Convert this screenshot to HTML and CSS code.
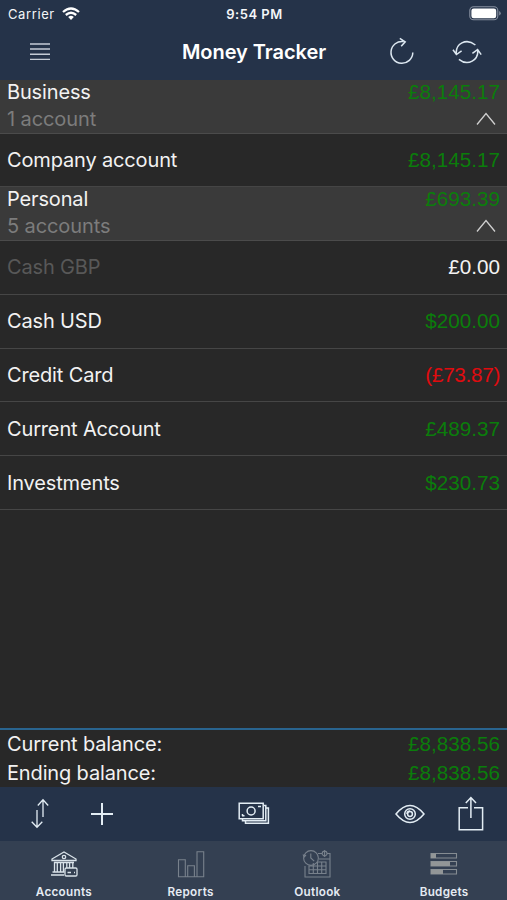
FILE: index.html
```html
<!DOCTYPE html>
<html lang="en">
<head>
<meta charset="utf-8">
<title>Money Tracker</title>
<link rel="stylesheet" href="styles.css">
</head>
<body>
<div class="app">
  <header class="header">
    <div class="status">
      <div class="carrier"><span>Carrier</span>
        <svg class="wifi" width="18" height="14" viewBox="0 0 18 14" fill="none" stroke="#fff" stroke-width="2.3"><path d="M1 5Q9-2 17 5M3.8 8Q9 3.6 14.2 8"/><path d="M6.2 10Q9 7.7 11.8 10L9 13z" fill="#fff" stroke="none"/></svg>
      </div>
      <span class="time">9:54 PM</span>
      <svg class="battery" width="32" height="15" viewBox="0 0 32 15"><rect x=".8" y=".8" width="28" height="13" rx="3.8" fill="none" stroke="#8790a0" stroke-width="1.1"/><rect x="2.4" y="2.4" width="24.8" height="9.8" rx="2.3" fill="#fff"/><path d="M30.2 5v4.6q1.5-.7 1.5-2.3T30.2 5" fill="#8790a0"/></svg>
    </div>
    <div class="titlebar">
      <svg class="menu" width="20" height="18" viewBox="0 0 20 18" stroke="#c5ccd6" stroke-width="1.4"><path d="M0 1h20M0 6h20M0 11.2h20M0 16.4h20"/></svg>
      <h1>Money Tracker</h1>
      <div class="actions">
        <svg width="26" height="30" viewBox="0 0 26 30" fill="none" stroke="#dce7f0" stroke-width="1.5"><path d="M23.8 15.5A10.9 10.9 0 1 1 14.5 4.6M10.8 1.4 16.2 4.8 12.2 9.3"/></svg>
        <svg width="30" height="26" viewBox="0 0 30 26" fill="none" stroke="#dce7f0" stroke-width="1.5"><path d="M4.3 15C3.3 5 14-1.5 23.4 6M1 10.7l3.4 4.8 5.2-3.6M25.7 11c1 9.8-9.5 16.8-18.8 9.3M20.4 14.3l5.2-3.7 3.6 5"/></svg>
      </div>
    </div>
  </header>

  <main class="list">
    <section class="group">
      <div class="line"><span>Business</span><span class="money">£8,145.17</span></div>
      <div class="line sub"><span>1 account</span><svg class="chevron" width="20" height="14" viewBox="0 0 20 14"><path d="M1 12.5 10 1.5l9 11"/></svg></div>
    </section>
    <div class="row short"><span>Company account</span><span class="money">£8,145.17</span></div>
    <section class="group personal">
      <div class="line"><span>Personal</span><span class="money">£693.39</span></div>
      <div class="line sub"><span>5 accounts</span><svg class="chevron" width="20" height="14" viewBox="0 0 20 14"><path d="M1 12.5 10 1.5l9 11"/></svg></div>
    </section>
    <div class="row"><span class="inactive">Cash GBP</span><span class="money zero">£0.00</span></div>
    <div class="row"><span>Cash USD</span><span class="money">$200.00</span></div>
    <div class="row"><span>Credit Card</span><span class="money negative">(£73.87)</span></div>
    <div class="row"><span>Current Account</span><span class="money">£489.37</span></div>
    <div class="row"><span>Investments</span><span class="money">$230.73</span></div>
  </main>

  <section class="totals">
    <div class="total"><span>Current balance:</span><span class="money">£8,838.56</span></div>
    <div class="total"><span>Ending balance:</span><span class="money">£8,838.56</span></div>
  </section>

  <div class="toolbar">
    <svg class="sort" width="20" height="32" viewBox="0 0 20 32"><path d="M13 19V2M7.8 7.5l5.2-5.7 5.2 5.7M7 12v17M1.7 23.8l5.3 5.5 5.3-5.5"/></svg>
    <svg class="plus" width="22" height="22" viewBox="0 0 22 22"><path d="M11 0v22M0 11h22"/></svg>
    <svg class="cash" width="32" height="24" viewBox="0 0 32 24"><path d="M1.2 1.2h24v15.5h-24zM26 3.5h1.8v15.2H4.5V17M28.2 6h2.2v15.2H7.5v-2.3"/><circle cx="13.1" cy="9" r="4"/><path d="M20 4.5h3M4 13.7h2.5M4.5 12v2"/></svg>
    <svg class="eye" width="30" height="20" viewBox="0 0 30 20"><path d="M1 10Q15-7 29 10 15 27 1 10z"/><circle cx="15" cy="10" r="5.3"/><circle cx="15" cy="10" r="2.4"/><path d="M12 10q0-3 3-3"/></svg>
    <svg class="share" width="26" height="36" viewBox="0 0 26 36"><path d="M10 11.8H1.2V33.8H24.6V11.8H16M12.9 22V2M7.8 7l5.1-5.5L18 7"/></svg>
  </div>

  <nav class="tabs">
    <div class="tab active"><svg width="28" height="28" viewBox="0 0 28 28"><path d="M2 9 14 2l12 7v1.5H2zM4 12.5h20M2.5 22h12M1 25h13M4.5 12v10M7.3 12v10M10.6 12v10M13.4 12v10M16.8 12v6M19.6 12v6M22.8 12v6"/><circle cx="14" cy="7" r="1.7"/><rect x="15" y="18" width="12" height="8" rx="1.3"/><path d="M17.5 22.5h3.5M24 22.5h1"/></svg><span>Accounts</span></div>
    <div class="tab"><svg width="28" height="28" viewBox="0 0 28 28"><path d="M1.5 9.7h6.8v17H1.5zM10.7 15.7h6.7v11h-6.7zM20 1.8h6.7v24.9H20zM8.3 26.7h2.4M17.4 26.7H20"/></svg><span>Reports</span></div>
    <div class="tab"><svg width="30" height="30" viewBox="0 0 30 30"><circle cx="9" cy="9" r="7.4"/><path d="M8.8 4.5V9l3.4 3.2M1 5.5l1.3 2.3L4 6M3 17v11h25V4.5h-3M16 4.5h4M17 10h11M25 4.5a2.4 2.4 0 1 1-4.8 0 2.4 2.4 0 0 1 4.8 0M22.6 1v7M7 17h17v7.5H7zM11.3 14v10.5M15.5 13v11.5M19.7 13v11.5M16 13h8v6M7 20.7h17"/></svg><span>Outlook</span></div>
    <div class="tab"><svg class="budget" width="28" height="24" viewBox="0 0 28 24"><path class="track" d="M1 1.5h25.5v4.5H1zM1 9.5h25.5V14H1zM1 17.5h25.5V22H1z"/><path class="fill" d="M1 1.5h5V6H1zM1 9.5h19V14H1zM1 17.5h12V22H1z"/></svg><span>Budgets</span></div>
  </nav>
</div>
</body>
</html>
```
FILE: styles.css
```css
* { box-sizing: border-box; }
body { margin: 0; background: #282828; color: #f2f2f2; font-family: Inter, "Liberation Sans", sans-serif; }
svg { display: block; flex: none; }
.app { width: 507px; height: 900px; display: flex; flex-direction: column; overflow: hidden; }
.header { height: 80px; background: #253349; flex: none; }
.status { height: 27px; display: grid; grid-template-columns: 1fr auto 1fr; align-items: center; padding: 0 6px 0 8px; font-size: 13px; color: #f4f6f8; }
.carrier { display: flex; gap: 7px; align-items: center; letter-spacing: .6px; }
.time { font-weight: 600; letter-spacing: .5px; }
.battery { justify-self: end; }
.titlebar { height: 50px; display: grid; grid-template-columns: 1fr auto 1fr; align-items: center; padding: 0 25px 0 30px; }
h1 { margin: 0 4px 0 0; font-size: 20px; font-weight: 600; letter-spacing: -.05px; color: #fff; }
.actions { justify-self: end; display: flex; align-items: center; gap: 37px; }
.list { flex: 1; font-size: 20px; letter-spacing: -.15px; }
.group { height: 54px; background: #3a3a3a; border-bottom: 1px solid #4b4b4b; }
.personal { border-top: 1px solid #454545; height: 55px; }
.line { height: 24px; display: flex; justify-content: space-between; align-items: center; padding: 0 7px; }
.sub { height: 29px; color: #7c7c7c; letter-spacing: -.1px; }
.chevron { margin-right: 4px; fill: none; stroke: #d0d0d0; stroke-width: 1.3; }
.row { height: 53.8px; display: flex; justify-content: space-between; align-items: center; padding: 0 7px; border-bottom: 1px solid #464646; }
.short { height: 52px; border: 0; }
.inactive { color: #585858; }
.money { font-family: "Liberation Sans", sans-serif; font-size: 20.7px; letter-spacing: 0; color: #0b7d0b; }
.zero { color: #f2f2f2; }
.negative { color: #e00b0f; letter-spacing: -.3px; }
.totals { height: 59px; border-top: 2px solid #29648f; font-size: 20px; letter-spacing: -.15px; flex: none; }
.total { height: 28.5px; display: flex; justify-content: space-between; align-items: center; padding: 0 7px; }
.toolbar { height: 54px; background: #253349; display: flex; align-items: center; padding: 0 23px 0 30px; flex: none; }
.toolbar svg { fill: none; stroke: #e3edf4; stroke-width: 1.5; }
.toolbar .sort { stroke-width: 1.3; }
.toolbar .plus { margin-left: 41px; stroke-width: 2; }
.toolbar .cash { margin-left: 125px; }
.toolbar .eye { margin-left: auto; }
.toolbar .share { margin-left: 33px; }
.tabs { height: 59px; background: #344052; display: grid; grid-template-columns: repeat(4, 126.75px); flex: none; }
.tab { display: grid; grid-template-rows: 45px 11px; align-content: start; justify-items: center; align-items: center; font-size: 11.7px; line-height: 14px; font-weight: 600; color: #e5ebf2; letter-spacing: .3px; padding-left: 1px; }
.tab svg { fill: none; stroke: #78818c; stroke-width: 1.1; }
.tab.active svg { stroke: #d9e2e9; stroke-width: 1.3; }
.tab .budget .track { fill: #344052; stroke: #858c92; }
.tab .budget .fill { fill: #929697; stroke: none; }
```
